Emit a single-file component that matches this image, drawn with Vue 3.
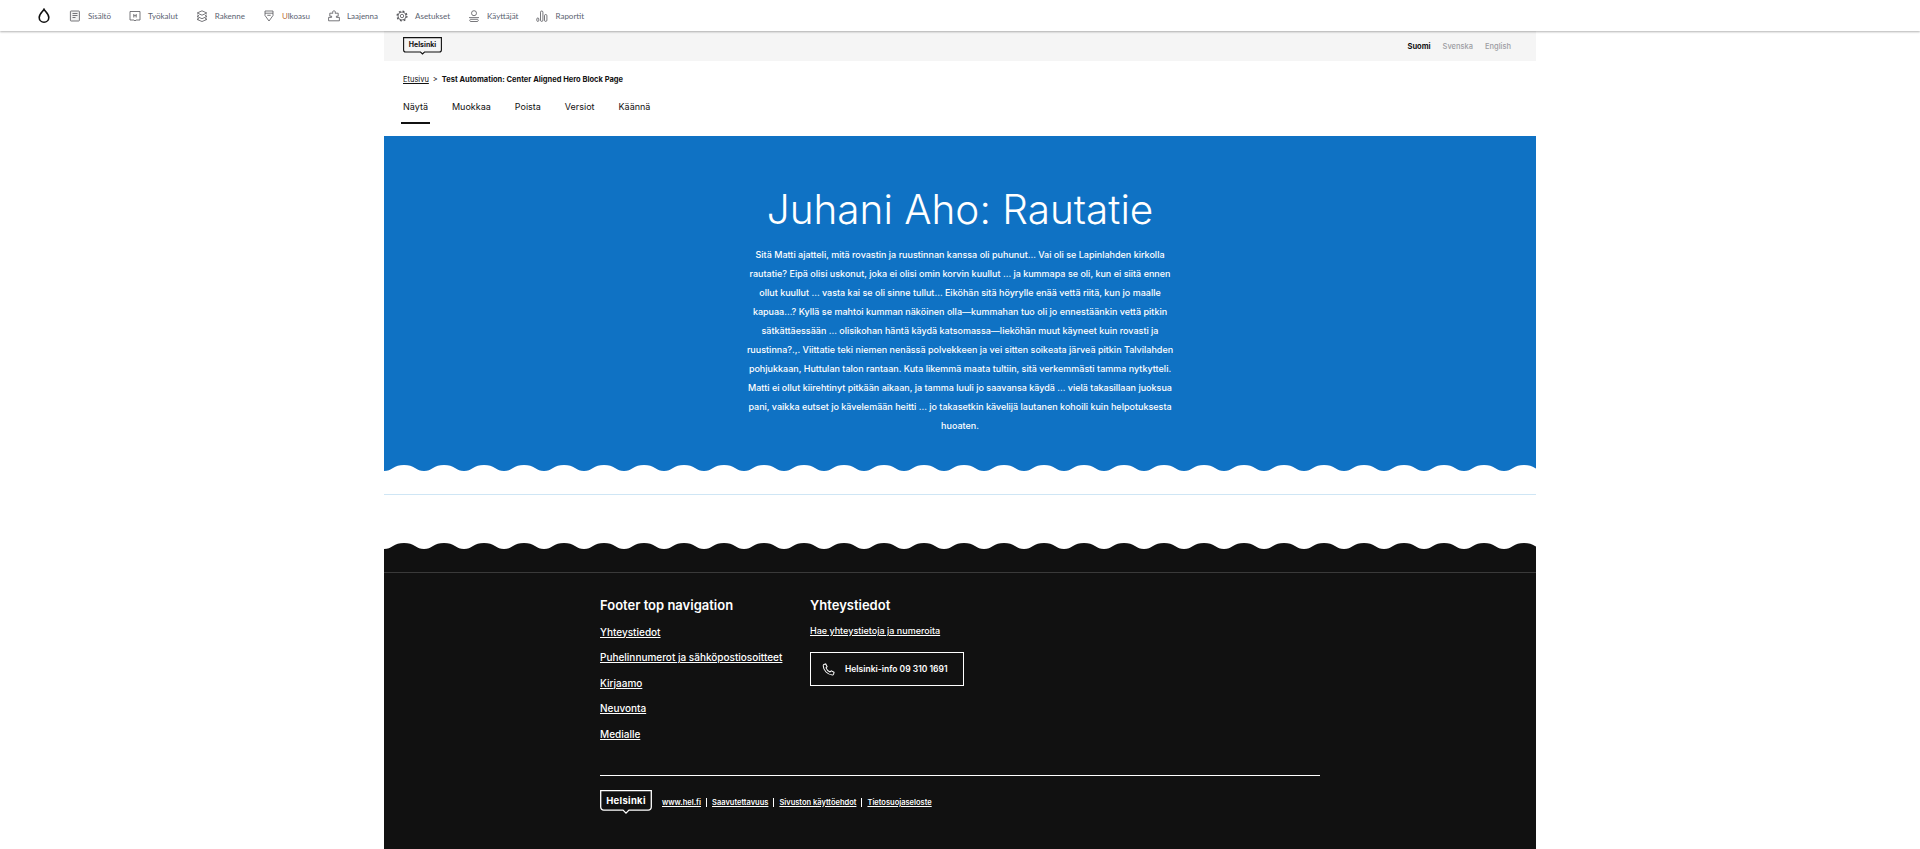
<script setup>
const navItems = [
  { label: 'Sisältö', icon: 'content' },
  { label: 'Työkalut', icon: 'tools' },
  { label: 'Rakenne', icon: 'structure' },
  { label: 'Ulkoasu', icon: 'appearance', accent: true },
  { label: 'Laajenna', icon: 'extend' },
  { label: 'Asetukset', icon: 'config' },
  { label: 'Käyttäjät', icon: 'people' },
  { label: 'Raportit', icon: 'reports' }
]
const heroLines = [
  'Sitä Matti ajatteli, mitä rovastin ja ruustinnan kanssa oli puhunut… Vai oli se Lapinlahden kirkolla',
  'rautatie? Eipä olisi uskonut, joka ei olisi omin korvin kuullut … ja kummapa se oli, kun ei siitä ennen',
  'ollut kuullut … vasta kai se oli sinne tullut… Eiköhän sitä höyrylle enää vettä riitä, kun jo maalle',
  'kapuaa…? Kyllä se mahtoi kumman näköinen olla—kummahan tuo oli jo ennestäänkin vettä pitkin',
  'sätkättäessään … olisikohan häntä käydä katsomassa—lieköhän muut käyneet kuin rovasti ja',
  'ruustinna?.,. Viittatie teki niemen nenässä polvekkeen ja vei sitten soikeata järveä pitkin Talvilahden',
  'pohjukkaan, Huttulan talon rantaan. Kuta likemmä maata tultiin, sitä verkemmästi tamma nytkytteli.',
  'Matti ei ollut kiirehtinyt pitkään aikaan, ja tamma luuli jo saavansa käydä … vielä takasillaan juoksua',
  'pani, vaikka eutset jo kävelemään heitti … jo takasetkin kävelijä lautanen kohoili kuin helpotuksesta',
  'huoaten.'
]
const tabs = ['Näytä', 'Muokkaa', 'Poista', 'Versiot', 'Käännä']
const footerLinks = ['Yhteystiedot', 'Puhelinnumerot ja sähköpostiosoitteet', 'Kirjaamo', 'Neuvonta', 'Medialle']
const legalLinks = ['www.hel.fi', 'Saavutettavuus', 'Sivuston käyttöehdot', 'Tietosuojaseloste']
</script>

<template>
  <div class="page">
    <nav class="toolbar">
      <svg class="drop" width="12" height="15" viewBox="0 0 12 15"><path d="M6 1.300C5 3.300 1.200 6 1.200 9.400a4.800 4.800 0 0 0 9.600 0C10.800 6 7 3.300 6 1.300Z" fill="none" stroke="#111" stroke-width="1.600"/></svg>
      <a v-for="item in navItems" :key="item.label" class="tool" :class="{ accent: item.accent }">
        <svg class="tool-icon" width="12" height="12" viewBox="0 0 12 12" fill="none" stroke="#55565a" stroke-width="0.8">
          <g v-if="item.icon === 'content'"><rect x="1.400" y="1" width="9" height="10" rx="0.700" fill="#f1f1f1"/><path d="M3.500 3.500h5M3.500 5.500h5M3.500 7.500h3"/></g>
          <g v-else-if="item.icon === 'tools'"><path d="M1 1.500h10v8.500H7L6 11l-1-1H1Z"/><path d="M4.800 4v3.500M7.200 4v3.500M4.800 5.700h2.400"/></g>
          <g v-else-if="item.icon === 'structure'"><path d="M6 .8 10.800 3 6 5.200 1.200 3Z"/><path d="M1.200 4.900 2.800 5.700 1.200 6.500 6 8.700l4.800-2.200-1.600-.8 1.600-.8M1.200 8l1.600.800-1.600.700L6 11.500l4.800-2-1.600-.7 1.600-.8"/></g>
          <g v-else-if="item.icon === 'appearance'"><path d="M2 1h8v4.500L6 11 2 5.500Z"/><path d="M2 3.200h8M4.300 5.300h3.400"/></g>
          <g v-else-if="item.icon === 'extend'"><path d="M6 .8c1.400 0 1.700 1.400 1 2.400h3.200v3H8.400v1.200h3v3.400H.6V7.400h3V6.200H1.800v-3H5C4.300 2.200 4.600.8 6 .8Z"/></g>
          <g v-else-if="item.icon === 'config'"><circle cx="6" cy="6" r="1.700"/><circle cx="6" cy="6" r="4"/><circle cx="6" cy="6" r="4.900" stroke-width="1.300" stroke-dasharray="1.900 1.950"/></g>
          <g v-else-if="item.icon === 'people'"><circle cx="6" cy="3.200" r="2.500"/><path d="M1 7.600h10"/><path d="M2.500 9.300h7a1.200 1.200 0 0 1 0 2.200h-7a1.200 1.200 0 0 1 0-2.200Z"/></g>
          <g v-else><rect x="0.800" y="8" width="2" height="3.400" rx="1"/><rect x="4.500" y="1" width="2.400" height="10.400" rx="1.200"/><rect x="8.500" y="4.500" width="2.400" height="6.900" rx="1.200"/></g>
        </svg>
        <span>{{ item.label }}</span>
      </a>
    </nav>

    <div class="container">
      <header class="langbar">
        <div class="logo logo-small">
          <svg width="39" height="18" viewBox="0 0 39 18" fill="none" stroke="#111" stroke-width="1.100"><path d="M.6.600h37.800v12.400a2 2 0 0 1-2 2H21.500l-2 2-2-2H2.600a2 2 0 0 1-2-2Z"/></svg>
          <span>Helsinki</span>
        </div>
        <div class="langs">
          <span class="lang active">Suomi</span>
          <span class="lang">Svenska</span>
          <span class="lang">English</span>
        </div>
      </header>

      <div class="crumbs">
        <a class="crumb-link">Etusivu</a>
        <span class="crumb-sep">&gt;</span>
        <strong>Test Automation: Center Aligned Hero Block Page</strong>
      </div>

      <ul class="tabs">
        <li v-for="(t, i) in tabs" :key="t" :class="{ on: i === 0 }">{{ t }}</li>
      </ul>

      <section class="hero">
        <h1>Juhani Aho: Rautatie</h1>
        <p><template v-for="line in heroLines" :key="line">{{ line }}<br></template></p>
        <svg class="wave" width="100%" height="8" aria-hidden="true">
          <defs>
            <pattern id="wave-white" width="40" height="8" patternUnits="userSpaceOnUse">
              <path d="M0 7C4 7 6 6 9 4 12 2 15 1 20 1S28 2 31 4C34 6 36 7 40 7V8H0Z" fill="#fff"/>
            </pattern>
          </defs>
          <rect width="100%" height="8" fill="url(#wave-white)"/>
        </svg>
      </section>

      <div class="separator"></div>

      <footer class="footer">
        <svg class="wave-top" width="100%" height="8" aria-hidden="true">
          <defs>
            <pattern id="wave-dark" width="40" height="8" patternUnits="userSpaceOnUse">
              <path d="M0 7C4 7 6 6 9 4 12 2 15 1 20 1S28 2 31 4C34 6 36 7 40 7V8H0Z" fill="#111"/>
            </pattern>
          </defs>
          <rect width="100%" height="8" fill="url(#wave-dark)"/>
        </svg>
        <div class="footer-body">
          <div class="footer-line"></div>
          <div class="footer-inner">
            <div class="columns">
              <div class="col-a">
                <h2>Footer top navigation</h2>
                <a v-for="l in footerLinks" :key="l" class="flink">{{ l }}</a>
              </div>
              <div class="col-b">
                <h2>Yhteystiedot</h2>
                <a class="contact-link">Hae yhteystietoja ja numeroita</a>
                <div class="phone">
                  <svg width="13" height="13" viewBox="0 0 14 14" fill="none" stroke="#fff" stroke-width="1.100"><path d="M2 1.500 4 1l1.500 3L4.300 5.300c.7 1.800 2.300 3.500 4.300 4.400L10 8.500l3 1.600-.6 2.200c-.2.500-.7.700-1.300.7C6 12.500 1.500 8 1.300 3c0-.7.200-1.300.7-1.500Z"/></svg>
                  <span>Helsinki-info 09 310 1691</span>
                </div>
              </div>
            </div>
            <div class="bottom">
              <div class="logo logo-large">
                <svg width="52" height="25" viewBox="0 0 52 25" fill="none" stroke="#fff" stroke-width="1.300"><path d="M.7.700h50.600v16.400a3 3 0 0 1-3 3H29l-3 3-3-3H3.700a3 3 0 0 1-3-3Z"/></svg>
                <span>Helsinki</span>
              </div>
              <div class="legal">
                <a v-for="l in legalLinks" :key="l">{{ l }}</a>
              </div>
            </div>
          </div>
        </div>
      </footer>
    </div>
  </div>
</template>

<style>
html, body { margin: 0; background: #fff; }
</style>

<style scoped>
.page { font-family: Inter, "Liberation Sans", sans-serif; color: #111; height: 849px; overflow: hidden; }
.toolbar { height: 31px; box-sizing: border-box; display: flex; align-items: center; gap: 18px; padding-left: 38px; background: #fff; box-shadow: 0 1px 2px rgba(0,0,0,.3); position: relative; z-index: 2; }
.drop { margin-right: 1px; }
.tool { display: flex; align-items: center; gap: 7px; font-family: Lato, sans-serif; font-size: 8px; color: #5a6270; }
.tool-icon { flex: none; }
.accent span { display: inline-block; }
.accent span::first-letter { color: #c0703a; }
.container { width: 1152px; margin: 0 auto; }
.langbar { height: 30px; background: #f5f5f5; display: flex; align-items: center; justify-content: space-between; padding: 0 25px 0 19px; }
.logo { position: relative; display: flex; justify-content: center; flex: none; }
.logo svg { position: absolute; left: 0; top: 0; }
.logo-small { width: 39px; height: 18px; align-self: flex-start; margin-top: 6px; font-size: 7px; font-weight: 700; line-height: 16px; }
.langs { display: flex; gap: 12px; font-size: 7.500px; }
.lang { color: #9c9ca2; font-weight: 500; }
.lang.active { color: #111; font-weight: 700; }
.crumbs { display: flex; align-items: center; gap: 4px; padding: 12px 0 0 19px; height: 13px; font-size: 7.500px; }
.crumb-link { text-decoration: underline; }
.crumbs strong { font-weight: 700; }
.tabs { display: flex; list-style: none; margin: 15px 0 11px; padding: 0 0 0 17px; gap: 20px; height: 24px; font-size: 9px; }
.tabs li { padding: 0 2px 9px; line-height: 12px; height: 12px; }
.tabs li.on { border-bottom: 2px solid #111; }
.hero { background: #0f72c4; color: #fff; text-align: center; position: relative; height: 336px; box-sizing: border-box; padding-top: 49px; }
.hero h1 { margin: 0; font-size: 40.500px; font-weight: 350; line-height: 50px; }
.hero p { margin: 10px 0 0; font-size: 9px; line-height: 19px; font-weight: 500; }
.wave { position: absolute; left: 0; bottom: 0; display: block; }
.separator { margin-top: 22px; height: 1px; background: #cfe6f5; }
.footer { margin-top: 47px; position: relative; }
.wave-top { display: block; }
.footer-body { background: #111; height: 299px; color: #fff; padding-top: 22px; box-sizing: border-box; }
.footer-line { height: 1px; background: #3a3a3a; }
.footer-inner { padding: 0 216px; }
.columns { display: flex; gap: 29px; margin-top: 24px; }
.col-a { width: 181px; display: flex; flex-direction: column; align-items: flex-start; }
.col-b { display: flex; flex-direction: column; align-items: flex-start; }
h2 { margin: 0; font-size: 13px; line-height: 16px; font-weight: 600; }
.flink { color: #fff; text-decoration: underline; font-size: 10px; font-weight: 500; line-height: 15px; margin-top: 10.500px; white-space: nowrap; }
.flink:first-of-type { margin-top: 11.500px; }
.contact-link { color: #fff; text-decoration: underline; font-size: 9px; font-weight: 500; line-height: 12px; margin-top: 12px; }
.phone { margin-top: 15px; width: 154px; height: 34px; border: 1px solid #fff; display: flex; align-items: center; gap: 10px; padding-left: 11px; box-sizing: border-box; font-size: 8.500px; font-weight: 600; }
.bottom { margin-top: 33px; border-top: 1px solid #fff; display: flex; align-items: flex-start; gap: 10px; padding-top: 14px; }
.logo-large { width: 52px; height: 25px; font-size: 9.500px; font-weight: 700; line-height: 21px; letter-spacing: .3px; }
.legal { display: flex; font-size: 7.500px; font-weight: 600; margin-top: 8px; }
.legal a { text-decoration: underline; padding: 0 5px; border-left: 1px solid #fff; line-height: 9px; }
.legal a:first-child { border-left: 0; padding-left: 0; }
</style>
